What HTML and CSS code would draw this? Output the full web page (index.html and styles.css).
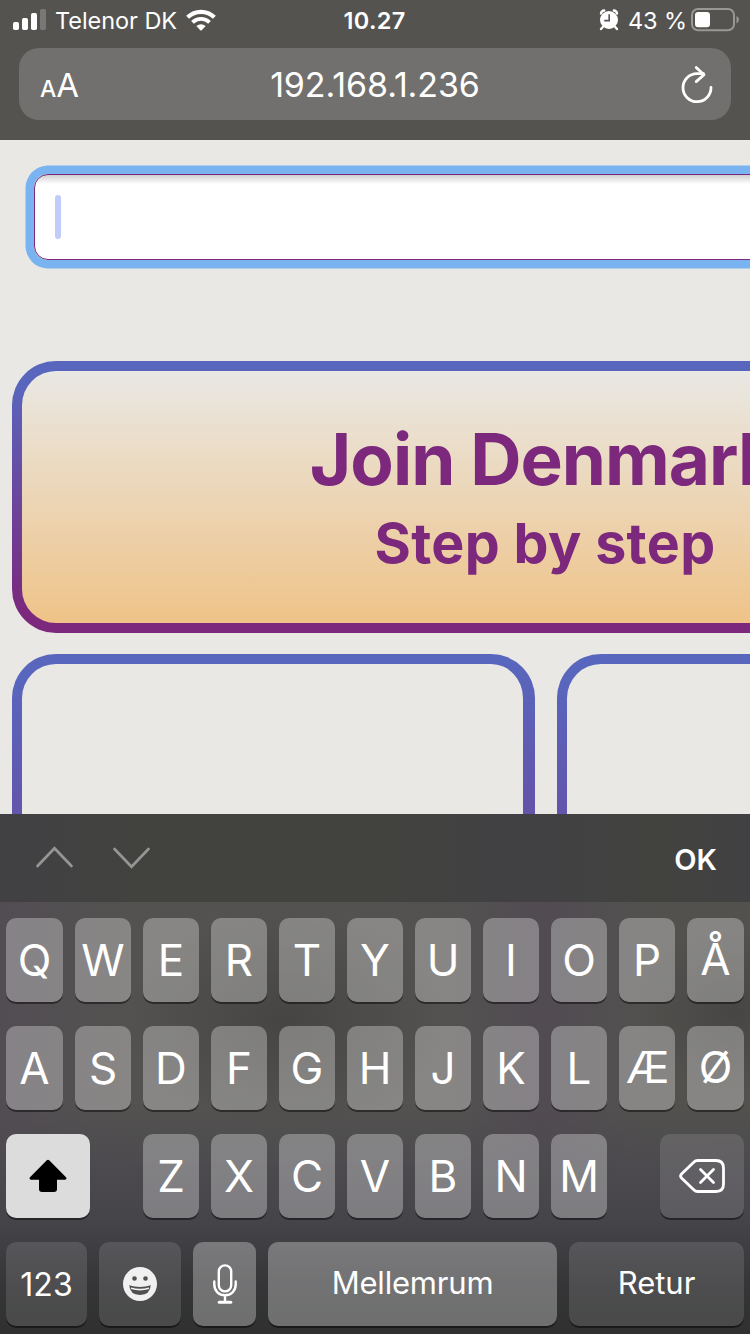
FILE: index.html
```html
<!DOCTYPE html>
<html lang="da">
<head>
<meta charset="utf-8">
<title>Join Denmark</title>
<link rel="stylesheet" href="styles.css">
</head>
<body>
<div class="phone">
  <header class="browser">
    <div class="status">
      <div class="status-left">
        <svg class="signal" width="34" height="22" viewBox="0 0 34 22"><g fill="#fff"><rect x="0" y="13" width="6" height="8" rx="1.7"/><rect x="9" y="9" width="6" height="12" rx="1.7"/><rect x="18" y="4" width="6" height="17" rx="1.7"/><rect x="27" y="0" width="6" height="21" rx="1.7" opacity=".22"/></g></svg>
        <span class="carrier">Telenor DK</span>
        <svg class="wifi" width="30" height="22" viewBox="0 0 30 22"><g fill="none" stroke="#fff" stroke-width="4.2"><path d="M1.6 8.2A19.3 19.3 0 0 1 28.400 8.200"/><path d="M6.500 13.300A12.200 12.200 0 0 1 23.500 13.300" stroke-width="3.900"/></g><path d="M10.300 17.100Q15 13.600 19.700 17.100L15.700 21.200Q15 21.800 14.300 21.200Z" fill="#fff"/></svg>
      </div>
      <span class="clock">10.27</span>
      <div class="status-right">
        <svg class="alarm" width="20" height="22" viewBox="0 0 20 22"><circle cx="10" cy="11" r="9" fill="#fff"/><path d="M2 4.500Q2.500 1.700 5.200 1.500M18 4.500Q17.500 1.700 14.800 1.500M3.800 18 2 20M16.200 18 18 20" fill="none" stroke="#fff" stroke-width="2.400" stroke-linecap="round"/><path d="M10.200 5.300V11.600H5.200" fill="none" stroke="#555450" stroke-width="1.600"/></svg>
        <span class="percent">43 %</span>
        <svg class="battery" width="48" height="24" viewBox="0 0 48 24"><rect x="1" y="1" width="42" height="21.200" rx="6" fill="none" stroke="#999895" stroke-width="2"/><rect x="4" y="4" width="15" height="15.200" rx="3.200" fill="#fff"/><path d="M45.500 8Q48 9 48 11.600T45.500 15.500Z" fill="#999895"/></svg>
      </div>
    </div>
    <div class="address">
      <span class="text-size"><span class="small-a">A</span><span class="large-a">A</span></span>
      <span class="url">192.168.1.236</span>
      <svg class="reload" width="34" height="40" viewBox="0 0 34 40" fill="none" stroke="#fff" stroke-width="2.800" stroke-linecap="round" stroke-linejoin="round"><path d="M31 22.500A14 14 0 1 1 17 8.700H23.500"/><path d="M16.200 2.500 24 9.700 16.200 16.600"/></svg>
    </div>
  </header>

  <main class="page">
    <div class="field"><span class="caret"></span></div>
    <section class="banner">
      <h1>Join Denmark</h1>
      <h2>Step by step</h2>
    </section>
    <div class="cards"><div class="card"></div><div class="card"></div></div>
  </main>

  <div class="toolbar">
    <svg class="arrows" width="116" height="24" viewBox="0 0 116 24" fill="none" stroke="#959595" stroke-width="2.700" stroke-linecap="round"><path d="M2.500 20 19.500 2.200 36.500 20"/><path d="M79.500 3 96.500 20.800 113.500 3"/></svg>
    <span class="ok">OK</span>
  </div>

  <div class="keyboard">
    <div class="keys letters">
      <span class="key">Q</span><span class="key">W</span><span class="key">E</span><span class="key">R</span><span class="key">T</span><span class="key">Y</span><span class="key">U</span><span class="key">I</span><span class="key">O</span><span class="key">P</span><span class="key raised">Å</span>
    </div>
    <div class="keys letters">
      <span class="key">A</span><span class="key">S</span><span class="key">D</span><span class="key">F</span><span class="key">G</span><span class="key">H</span><span class="key">J</span><span class="key">K</span><span class="key">L</span><span class="key raised ae">Æ</span><span class="key raised">Ø</span>
    </div>
    <div class="keys third">
      <span class="key shift"><svg width="38" height="34" viewBox="0 0 38 34"><path d="M17.800 1.300Q19 .2 20.200 1.300L37 18.300Q38.400 20.400 36 20.700H28V30Q28 33 25 33H13Q10 33 10 30V20.700H2Q-.4 20.400 1 18.300Z" fill="#000"/></svg></span>
      <div class="keys mid">
        <span class="key">Z</span><span class="key">X</span><span class="key">C</span><span class="key">V</span><span class="key">B</span><span class="key">N</span><span class="key">M</span>
      </div>
      <span class="key dark delete"><svg width="46" height="34" viewBox="0 0 46 34" fill="none" stroke="#fff" stroke-width="2.800" stroke-linecap="round" stroke-linejoin="round"><path d="M18.500 1.500H37Q44.500 1.500 44.500 9V25Q44.500 32.500 37 32.500H18.500Q16.500 32.500 15 31L2.500 19Q.7 17 2.500 15L15 3Q16.500 1.500 18.500 1.500Z"/><path d="M21.500 10.500 34.500 23.500M34.500 10.500 21.500 23.500"/></svg></span>
    </div>
    <div class="keys bottom">
      <span class="key dark numbers">123</span>
      <span class="key dark"><svg width="34" height="34" viewBox="0 0 34 34"><circle cx="17" cy="17" r="17" fill="#f0f0f0"/><circle cx="11.500" cy="11.500" r="2.300" fill="#505050"/><circle cx="22.500" cy="11.500" r="2.300" fill="#505050"/><path d="M6.200 18.300Q17 21.800 27.800 18.300Q27 28 17 28T6.200 18.300Z" fill="#505050"/><path d="M8 21.200Q17 24 26 21.200" fill="none" stroke="#f0f0f0" stroke-width="1.700"/></svg></span>
      <span class="key"><svg width="24" height="40" viewBox="0 0 24 40" fill="none" stroke="#fff" stroke-width="2.400" stroke-linecap="round"><rect x="5.800" y="1.400" width="12.400" height="26" rx="6.200"/><path d="M1.300 17.500V20.500C1.300 27 6 31.200 12 31.200S22.700 27 22.700 20.500V17.500M12 31.200V37.500"/><path d="M6.200 38.300H17.800" stroke-width="3"/></svg></span>
      <span class="key space">Mellemrum</span>
      <span class="key dark return">Retur</span>
    </div>
  </div>
</div>
</body>
</html>
```

FILE: styles.css
```css
* { box-sizing: border-box; }
body { margin: 0; }
.phone {
  width: 750px;
  height: 1334px;
  overflow: hidden;
  display: flex;
  flex-direction: column;
  font-family: Inter, "Liberation Sans", sans-serif;
  color: #fff;
}
svg { display: block; flex: none; }

.browser { height: 140px; flex: none; background: #545350; padding: 0 19px; }
.status {
  height: 48px;
  margin: 0 -7px 0 -6px;
  padding-bottom: 8px;
  display: grid;
  grid-template-columns: 1fr auto 1fr;
  align-items: center;
  font-size: 23.5px;
  line-height: 40px;
}
.status-left, .status-right { display: flex; align-items: center; height: 40px; }
.status-right { justify-content: flex-end; }
.signal { margin-top: -1px; }
.carrier { margin-left: 8px; padding-top: 1px; width: 122px; letter-spacing: -.05px; white-space: nowrap; }
.wifi { margin-left: 9px; margin-top: -1px; }
.clock { padding-top: 1px; margin-left: -2px; font-weight: 600; letter-spacing: .3px; }
.percent { margin: 0 4px 0 9px; padding-top: 1px; white-space: nowrap; letter-spacing: -.1px; }
.alarm { margin-top: -2px; }
.battery { margin-right: -1px; margin-top: -1px; }
.address {
  height: 72px;
  border-radius: 20px;
  background: #71706e;
  display: grid;
  grid-template-columns: 1fr auto 1fr;
  align-items: center;
  padding: 0 17px 0 21px;
}
.text-size { line-height: 68px; padding-top: 3px; }
.small-a { font-size: 23px; font-weight: 500; }
.large-a { font-size: 33px; letter-spacing: -1px; }
.url { font-size: 34px; line-height: 66px; letter-spacing: -.1px; margin-left: -4px; padding-bottom: 3px; }
.reload { justify-self: end; margin-top: -3px; }

.page {
  height: 674px;
  flex: none;
  overflow: hidden;
  background: #e9e8e4;
  padding: 34px 0 0 12px;
}
.field {
  width: 1022px;
  height: 86px;
  margin-left: 22px;
  border: 1px solid #7b287d;
  border-radius: 14px;
  background: linear-gradient(#cfcfcf, #fff 9px);
  box-shadow: 0 0 0 8.5px #7ab4f0;
  padding: 20px;
}
.caret { display: block; width: 6px; height: 44px; border-radius: 3px; background: #c0cdfa; }
.banner {
  width: 1066px;
  height: 271.5px;
  margin-top: 101px;
  border: 10px solid transparent;
  border-radius: 44px;
  background:
    linear-gradient(#e9e8e4, #efc388) padding-box,
    linear-gradient(#5966bd 8%, #7b287d 92%) border-box;
  color: #7b287d;
  text-align: center;
  padding-top: 43px;
}
.banner h1 { margin: 0; font-size: 71px; line-height: 90px; font-weight: 700; letter-spacing: -1px; margin-left: -2px; }
.banner h2 { margin: 0; font-size: 55.5px; line-height: 78px; font-weight: 700; letter-spacing: .35px; }
.cards { display: flex; gap: 22px; margin-top: 21.5px; }
.card {
  flex: none;
  width: 523px;
  height: 520px;
  border: 10px solid transparent;
  border-right-width: 12px;
  border-radius: 44px;
  background:
    linear-gradient(#e9e8e4, #e9e8e4) padding-box,
    linear-gradient(178deg, #5966bd 5%, #7b287d 95%) border-box;
}

.toolbar {
  height: 88px;
  flex: none;
  display: flex;
  align-items: center;
  justify-content: space-between;
  padding: 0 33px 0 35px;
  background: linear-gradient(90deg, #414144, #42423f 20%, #42423f 50%, #414144 70%, #42423f 88%, #414143);
}
.ok { font-size: 29px; font-weight: 600; margin-top: 3px; }

.keyboard {
  flex: 1;
  padding: 16px 6px 8px;
  display: flex;
  flex-direction: column;
  gap: 24px;
  background:
    linear-gradient(to bottom, transparent 48%, #4b494e 63%, #454449 74%, #363638 88%, #2f302f 100%),
    radial-gradient(ellipse 160px 110px at 285px 118px, #464543, transparent),
    radial-gradient(ellipse 100px 80px at 735px 110px, #474644, transparent),
    linear-gradient(90deg, #524d53 0, #535250 17%, #535250 60%, #514b52 72%, #52514f 85%, #52514e 100%);
}
.keys { display: flex; gap: 12px; }
.keyboard > .keys { height: 84px; }
.key {
  width: 56px;
  height: 84px;
  flex: none;
  display: flex;
  align-items: center;
  justify-content: center;
  border-radius: 10px;
  background: rgba(255, 255, 255, .3);
  box-shadow: 0 2px 0 rgba(0, 0, 0, .45);
  font-size: 44px;
  font-weight: 400;
  line-height: 84px;
}
.letters .key:first-child, .letters .key:last-child { width: 57px; }
.raised { padding-bottom: 2px; }
.ae { letter-spacing: -1px; }
.key.dark { background: rgba(255, 255, 255, .12); }
.third { justify-content: space-between; }
.key.shift { width: 84px; background: #dcdcdc; }
.key.delete { width: 84px; }
.bottom .key { width: 63px; font-size: 31px; }
.bottom .key.dark { width: 82px; }
.bottom .key.numbers { width: 81px; padding-top: 2px; font-size: 32px; }
.bottom .key.space { width: 289px; padding-bottom: 2px; letter-spacing: -.2px; }
.bottom .key.return { width: 175px; padding-bottom: 2px; }
```
